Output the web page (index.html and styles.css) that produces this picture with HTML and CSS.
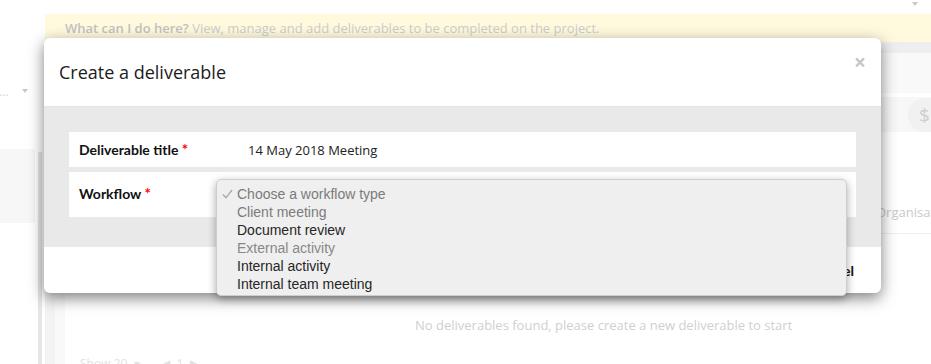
FILE: index.html
```html
<!DOCTYPE html>
<html lang="en">
<head>
    <meta charset="UTF-8">
    <meta name="viewport" content="width=device-width, initial-scale=1.0">
    <title>Deliverables</title>
    <link rel="stylesheet" href="styles.css">
</head>
<body>
    <div class="topbar"><span class="caret"></span></div>

    <div class="layout">
        <aside class="sidebar">
            <div class="side-nav">
                <div class="side-select"><span class="dots">...</span><span class="caret"></span></div>
                <div class="side-panel"></div>
            </div>
            <div class="side-track"></div>
        </aside>

        <main class="main">
            <div class="banner"><strong>What can I do here?</strong> View, manage and add deliverables to be completed on the project.</div>
            <div class="subbar"></div>
            <div class="tabs"></div>
            <div class="filters"><span class="currency">$</span></div>
            <div class="content">
                <div class="card">
                    <div class="table-head"><span class="col-org">Organisation</span></div>
                    <p class="empty">No deliverables found, please create a new deliverable to start</p>
                    <div class="pager">Show 20 &nbsp;&#9662; &nbsp; &nbsp; &nbsp; &#9664; &nbsp;1 &nbsp;&#9654;</div>
                </div>
            </div>
        </main>
    </div>

    <div class="modal">
        <div class="modal-header">
            <h4 class="modal-title">Create a deliverable</h4>
            <span class="close">&times;</span>
        </div>
        <div class="modal-body">
            <div class="form-row">
                <label class="form-label">Deliverable title <span class="req">*</span></label>
                <span class="form-value">14 May 2018 Meeting</span>
            </div>
            <div class="form-row form-row-tall">
                <label class="form-label">Workflow <span class="req">*</span></label>
                <ul class="select-popup">
                    <li class="opt disabled selected">
                        <svg class="check" width="11" height="10" viewBox="0 0 11 10"><path d="M1 5.5 L4 8.8 L10 1" fill="none" stroke="#a6a6a6" stroke-width="1.3"/></svg>
                        Choose a workflow type
                    </li>
                    <li class="opt disabled">Client meeting</li>
                    <li class="opt">Document review</li>
                    <li class="opt disabled light">External activity</li>
                    <li class="opt">Internal activity</li>
                    <li class="opt">Internal team meeting</li>
                </ul>
            </div>
        </div>
        <div class="modal-footer">
            <span class="btn-link">Cancel</span>
        </div>
    </div>
</body>
</html>
```

FILE: styles.css
```css
body {
    margin: 0;
    font-family: "Open Sans", sans-serif;
    background-color: #fff;
    overflow: hidden;
    height: 364px;
}

.caret {
    display: inline-block;
    width: 0;
    height: 0;
    border-left: 3px solid transparent;
    border-right: 3px solid transparent;
    border-top: 4px solid #c8c8c8;
}

.topbar {
    height: 14px;
    display: flex;
    justify-content: flex-end;
    align-items: flex-start;
    padding-right: 13px;
}

.topbar .caret {
    margin-top: 2px;
}

.layout {
    display: flex;
    height: 350px;
    overflow: hidden;
}

/* left column, faded behind the modal */
.sidebar {
    width: 45px;
    flex: none;
    display: flex;
}

.side-nav {
    width: 35px;
}

.side-select {
    margin-top: 67px;
    height: 20px;
    display: flex;
    align-items: center;
    justify-content: space-between;
    padding-right: 7px;
    font-size: 12px;
    color: #d6d6d6;
    overflow: hidden;
}

.dots {
    margin-left: -1px;
}

.side-panel {
    margin-top: 48px;
    height: 74px;
    background-color: #f7f7f7;
}

.side-track {
    width: 4px;
    margin-left: 3px;
    margin-top: 138px;
    background-color: #e6e6e6;
}

.main {
    flex: 1;
    min-width: 0;
    display: flex;
    flex-direction: column;
}

.banner {
    flex: none;
    height: 28px;
    line-height: 28px;
    padding-left: 20px;
    background-color: #fffadd;
    font-size: 13px;
    color: #cdcdcd;
    white-space: nowrap;
}

.banner strong {
    color: #c2c2c2;
    font-weight: 600;
}

.subbar {
    flex: none;
    height: 11px;
    background-color: #eeeeee;
}

.tabs {
    flex: none;
    height: 40px;
    margin-bottom: 4px;
    background-color: #f9f9f9;
}

.filters {
    flex: none;
    height: 35px;
    background-color: #f7f7f7;
    display: flex;
    justify-content: flex-end;
    align-items: center;
    overflow: hidden;
}

.currency {
    width: 26px;
    height: 34px;
    margin-right: -14px;
    border-radius: 18px 0 0 18px;
    background-color: #f1f1f1;
    color: #cfcfcf;
    font-size: 19px;
    line-height: 34px;
    padding-left: 11px;
}

.content {
    flex: 1;
    min-height: 0;
    overflow: hidden;
    background-color: #f3f3f3;
    padding-left: 10px;
}

.card {
    height: 100%;
    background-color: #fff;
    border-left: 10px solid #f9f9f9;
}

.table-head {
    height: 102px;
    border-bottom: 1px solid #f0f0f0;
    display: flex;
    align-items: flex-end;
    padding-bottom: 12px;
    box-sizing: border-box;
    overflow: hidden;
    white-space: nowrap;
}

.col-org {
    margin-left: 811px;
    font-size: 13px;
    color: #cacaca;
}

.empty {
    margin: 0;
    padding: 82px 0 0 350px;
    font-size: 13px;
    line-height: 18px;
    color: #cfcfcf;
    white-space: nowrap;
}

.pager {
    padding: 22px 0 0 15px;
    font-size: 12px;
    line-height: 16px;
    color: #e2e2e2;
}

/* modal */
.modal {
    position: absolute;
    left: 44px;
    top: 38px;
    width: 837px;
    border-radius: 6px;
    background-color: #fff;
    box-shadow: 0 5px 15px rgba(0, 0, 0, 0.5);
}

.modal-header {
    height: 69px;
    box-sizing: border-box;
    padding: 0 15px;
    display: flex;
    justify-content: space-between;
    align-items: center;
    border-bottom: 1px solid #e4e4e4;
}

.modal-title {
    margin: 0;
    font-size: 18px;
    font-weight: normal;
    color: #1c1c1c;
}

.close {
    align-self: flex-start;
    margin-top: 14px;
    font-size: 21px;
    font-weight: bold;
    line-height: 21px;
    color: #c6c6c6;
}

.modal-body {
    background-color: #e9e9e9;
    padding: 25px 25px 30px;
    display: flex;
    flex-direction: column;
    gap: 5px;
}

.form-row {
    position: relative;
    height: 35px;
    background-color: #fff;
    display: flex;
    align-items: center;
    padding-left: 10px;
}

.form-row-tall {
    height: 45px;
    padding-bottom: 2px;
    box-sizing: border-box;
}

.form-label {
    width: 169px;
    font-family: Lato, sans-serif;
    font-weight: bold;
    font-size: 14px;
    color: #111;
    padding-bottom: 2px;
}

.req {
    color: #f00;
    font-size: 15px;
}

.form-value {
    font-size: 13px;
    color: #222;
}

/* native-looking select popup */
.select-popup {
    position: absolute;
    left: 147px;
    top: 7px;
    width: 631px;
    box-sizing: border-box;
    margin: 0;
    padding: 5px 0 2px;
    list-style: none;
    background-color: #efefef;
    border: 1px solid #cdcdcd;
    border-radius: 5px;
    box-shadow: 0 3px 8px rgba(0, 0, 0, 0.35);
    font-family: "Liberation Sans", Arial, sans-serif;
    font-size: 14px;
    z-index: 2;
}

.opt {
    position: relative;
    height: 18px;
    line-height: 18px;
    padding-left: 20px;
    color: #262626;
}

.opt.disabled {
    color: #7b7b7b;
}

.opt.light {
    color: #888;
}

.check {
    position: absolute;
    left: 5px;
    top: 4px;
}

.modal-footer {
    height: 46px;
    display: flex;
    justify-content: flex-end;
    align-items: center;
    padding-right: 27px;
}

.btn-link {
    font-family: Lato, sans-serif;
    font-weight: bold;
    font-size: 14px;
    color: #111;
}
```
